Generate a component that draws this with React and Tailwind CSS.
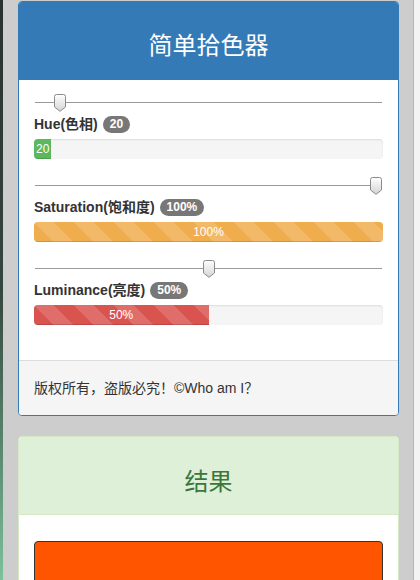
import React from "react";

const cjk = { fontFamily: '"Liberation Sans", "Noto Sans CJK SC", sans-serif' };

const stripes =
  "bg-[linear-gradient(45deg,rgba(255,255,255,.15)_25%,transparent_25%,transparent_50%,rgba(255,255,255,.15)_50%,rgba(255,255,255,.15)_75%,transparent_75%,transparent)] bg-size-[40px_40px]";

function Thumb() {
  return (
    <svg width="12" height="18" viewBox="0 0 12 18">
      <defs>
        <linearGradient id="tg" x1="0" y1="0" x2="0" y2="1">
          <stop offset="0" stopColor="#ffffff" />
          <stop offset="1" stopColor="#d4d4d4" />
        </linearGradient>
      </defs>
      <path
        d="M2.5 0.5 H9.5 Q11.5 0.5 11.5 2.5 V13 L6 17.3 L0.5 13 V2.5 Q0.5 0.5 2.5 0.5 Z"
        fill="url(#tg)"
        stroke="#8a8a8a"
        strokeWidth="1"
      />
    </svg>
  );
}

function Slider({ pos }) {
  return (
    <div className="relative h-[20px] mx-[1px]">
      <div className="absolute left-0 right-0 top-[10px] h-px bg-[#9a9a9a]" />
      <div className="absolute top-[2px]" style={{ left: `${pos * 335}px` }}>
        <Thumb />
      </div>
    </div>
  );
}

function Group({ label, badge, pos, width, color, striped, text, last }) {
  return (
    <div className={last ? "" : "mb-[16px]"}>
      <Slider pos={pos} />
      <div className="mt-[2px] h-[20px] flex items-center gap-[5px]">
        <span className="text-[14px] font-bold text-[#333]" style={cjk}>
          {label}
        </span>
        <span
          className="bg-[#777] text-white text-[12px] font-bold rounded-full px-[7px] leading-[17px]"
          style={cjk}
        >
          {badge}
        </span>
      </div>
      <div className="mt-[5px] h-[20px] bg-[#f5f5f5] rounded-[4px] overflow-hidden shadow-[inset_0_1px_2px_rgba(0,0,0,0.1)]">
        <div
          className={`h-full text-white text-[12px] leading-[20px] text-center shadow-[inset_0_-1px_0_rgba(0,0,0,0.15)] ${color} ${striped ? stripes : ""}`}
          style={{ width, ...cjk }}
        >
          {text}
        </div>
      </div>
    </div>
  );
}

export default function App() {
  return (
    <div className="w-[420px] h-[580px] overflow-hidden flex bg-[#cdcdcd]">
      <div className="w-[3px] shrink-0 bg-gradient-to-b from-[#2a322e] via-[#34473e] to-[#7cc19a]" />

      <div className="flex-1 pl-[15px] pr-[14px] pt-[1px]">
        {/* picker panel */}
        <div className="border border-[#337ab7] rounded-[4px] overflow-hidden bg-white">
          <div
            className="h-[78px] pt-[10px] bg-[#337ab7] flex items-center justify-center text-white text-[24px]"
            style={cjk}
          >
            简单拾色器
          </div>
          <div className="px-[15px] pt-[12px] pb-[35px]">
            <Group
              label="Hue(色相)"
              badge="20"
              pos={20 / 360}
              width="5%"
              color="bg-[#5cb85c]"
              text="20"
            />
            <Group
              label="Saturation(饱和度)"
              badge="100%"
              pos={1}
              width="100%"
              color="bg-[#f0ad4e]"
              striped
              text="100%"
            />
            <Group
              label="Luminance(亮度)"
              badge="50%"
              pos={0.5}
              width="50%"
              color="bg-[#d9534f]"
              striped
              text="50%"
              last
            />
          </div>
          <div
            className="h-[55px] bg-[#f5f5f5] border-t border-[#ddd] px-[15px] flex items-center text-[14px] text-[#333]"
            style={cjk}
          >
            版权所有，盗版必究！©Who am I？
          </div>
        </div>

        {/* result panel */}
        <div className="mt-[20px] border border-[#d6e9c6] rounded-[4px] overflow-hidden bg-white">
          <div
            className="h-[78px] pt-[12px] bg-[#dff0d8] border-b border-[#d6e9c6] flex items-center justify-center text-[#3c763d] text-[24px]"
            style={cjk}
          >
            结果
          </div>
          <div className="px-[15px] pt-[26px] pb-[15px]">
            <div className="h-[120px] bg-[#ff5500] border border-[#333] rounded-[4px]" />
          </div>
        </div>
      </div>

      <div className="w-[7px] shrink-0 bg-[#f3f3f3] border-l border-[#b5b5b5]" />
    </div>
  );
}
